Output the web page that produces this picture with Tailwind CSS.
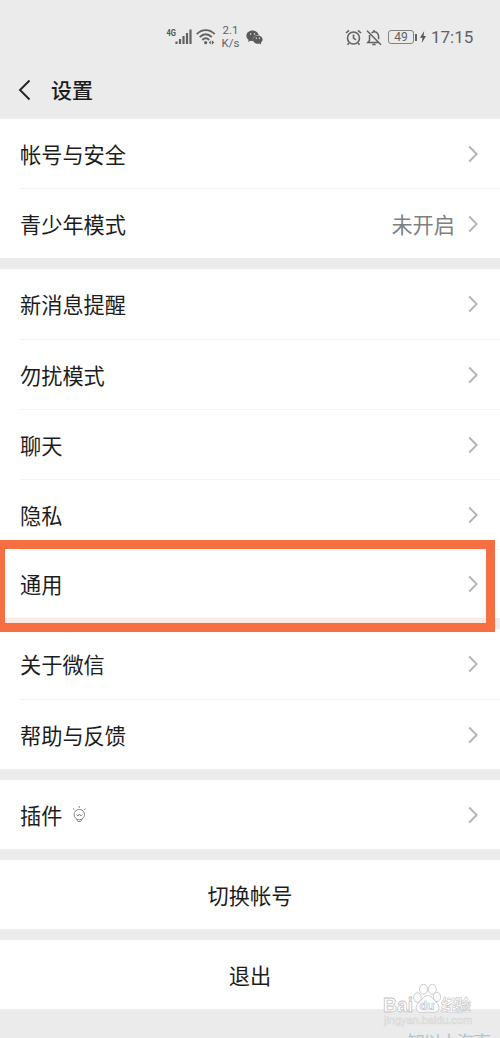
<!DOCTYPE html>
<html lang="zh-CN">

<head>
  <meta charset="UTF-8" />
  <meta name="viewport" content="width=device-width, initial-scale=1.0" />
  <title>设置</title>
  <script src="https://cdn.jsdelivr.net/npm/@tailwindcss/browser@4"></script>
</head>

<body class="bg-[#ebebeb]">
  <svg class="hidden">
    <symbol id="chevron" viewBox="0 0 10 18">
      <path d="M1.2 1.5 8.7 9 1.2 16.5" fill="none" stroke="#b2b2b2" stroke-width="1.8" />
    </symbol>
  </svg>

  <div class="relative w-[500px] h-[1038px] overflow-hidden bg-[#ebebeb] text-[21.2px] leading-none text-[#1c1c1c] font-['Noto_Sans_CJK_SC',sans-serif]">

    <!-- Status bar -->
    <div class="h-[60px] pt-[14px] pl-[166px] pr-[27px] flex items-center text-[#626262] font-[Roboto,sans-serif]">
      <svg class="w-[27px] h-[18px]" viewBox="0 0 27 18">
        <text x="0.5" y="7.5" font-size="9" font-weight="700" textLength="9.5" lengthAdjust="spacingAndGlyphs" fill="#555">4G</text>
        <path d="M10.500 13.500V16M14 11V16M17.500 8V16M21 5V16M24.500 1.500V16" stroke="#626262" stroke-width="2.200" fill="none" />
      </svg>
      <svg class="ml-[3px] w-[20px] h-[18px]" viewBox="0 0 20 18">
        <g fill="none" stroke="#626262" stroke-width="1.900">
          <path d="M.8 6.200C6 .8 13.500.8 18.700 6.200" />
          <path d="M3.700 9.200C7.500 5.200 12 5.200 15.800 9.200" />
          <path d="M6.300 12C8.500 9.700 11 9.700 13.200 12" />
        </g>
        <circle cx="9.700" cy="14.700" r="1.600" fill="#626262" />
        <path d="m12.800 14.500 2-2v4zM18.300 14.500l-2.500-2.300v4.600z" fill="#626262" />
      </svg>
      <div class="ml-[4px] w-[21px] text-center text-[11.5px] leading-[13px] whitespace-nowrap">2.1<br>K/s</div>
      <svg class="ml-[5px] w-[17px] h-[15px]" viewBox="0 0 17 15">
        <path d="M6.500.5C3 .5.400 2.800.400 5.800c0 1.700.800 3.100 2.200 4.100L2 12l2.300-1.200c.7.200 1.400.3 2.200.3h.5c-.9-3.300 1.900-6.300 5.700-6.200C12.200 2.300 9.600.5 6.500.5z" fill="#5a5a5a" />
        <path d="M11.800 5.400c-2.800 0-4.900 1.900-4.900 4.200s2.100 4.200 4.900 4.200c.6 0 1.200-.1 1.700-.3l1.800 1-.5-1.700c1.100-.8 1.800-1.900 1.800-3.200 0-2.300-2.100-4.200-4.800-4.200z" fill="#5a5a5a" />
        <g fill="#ebebeb"><circle cx="4.600" cy="4" r=".8" /><circle cx="8.500" cy="4" r=".8" /><circle cx="10.300" cy="8.300" r=".7" /><circle cx="13.400" cy="8.300" r=".7" /></g>
      </svg>
      <svg class="ml-auto w-[17px] h-[17px]" viewBox="0 0 17 17" fill="none" stroke="#626262" stroke-width="1.600">
        <circle cx="8.500" cy="9" r="6" />
        <path d="M8.500 5.500V9l2.500 2M1 4l3-2.700M16 4l-3-2.700M4 14l-1.500 1.800M13 14l1.500 1.800" />
      </svg>
      <svg class="ml-[4px] w-[16px] h-[17px]" viewBox="0 0 16 17" fill="none" stroke="#626262" stroke-width="1.500">
        <path d="M5.500 4C9.500 1.200 12.600 4 12.600 7.500v2.800M3.500 6v5.500l-1.700 2h11.400M6.300 15.500h3.400M8 1v1.500M1 1.800l14 14" />
      </svg>
      <div class="ml-[6px] w-[26px] h-[14px] border border-[#828282] rounded-[3px] text-[12px] leading-[13px] text-center">49</div>
      <div class="ml-px w-[2px] h-[7px] bg-[#626262]"></div>
      <svg class="ml-[3px] w-[6px] h-[12px]" viewBox="0 0 6 12"><path d="M4.200 0 0 6.800h2.500L1.800 12 6 5H3.500z" fill="#555" /></svg>
      <div class="ml-[5px] w-[42px] text-[17px] whitespace-nowrap">17:15</div>
    </div>

    <!-- Title bar -->
    <header class="h-[59px] flex items-center pl-[18px]">
      <svg class="w-[13px] h-[22px]" viewBox="0 0 13 22"><path d="M11.500 1.500 2 11l9.500 9.500" fill="none" stroke="#222" stroke-width="1.900" /></svg>
      <h1 class="ml-[20px] text-[21px] leading-none font-medium">设置</h1>
    </header>

    <main class="flex flex-col gap-[11px]">
      <section class="bg-white">
        <div class="h-[69px] pl-5 pr-[22px] flex items-center justify-between"><span>帐号与安全</span><svg class="w-[10px] h-[18px]"><use href="#chevron" /></svg></div>
        <div class="ml-5 h-[70px] pr-[22px] flex items-center border-t border-[#f3f3f3]"><span>青少年模式</span><span class="ml-auto mr-[13px] text-[#808080]">未开启</span><svg class="w-[10px] h-[18px]"><use href="#chevron" /></svg></div>
      </section>

      <section class="bg-white">
        <div class="h-[70px] pl-5 pr-[22px] flex items-center justify-between"><span>新消息提醒</span><svg class="w-[10px] h-[18px]"><use href="#chevron" /></svg></div>
        <div class="ml-5 h-[70px] pr-[22px] flex items-center justify-between border-t border-[#f3f3f3]"><span>勿扰模式</span><svg class="w-[10px] h-[18px]"><use href="#chevron" /></svg></div>
        <div class="ml-5 h-[70px] pr-[22px] flex items-center justify-between border-t border-[#f3f3f3]"><span>聊天</span><svg class="w-[10px] h-[18px]"><use href="#chevron" /></svg></div>
        <div class="ml-5 h-[70px] pr-[22px] flex items-center justify-between border-t border-[#f3f3f3]"><span>隐私</span><svg class="w-[10px] h-[18px]"><use href="#chevron" /></svg></div>
        <div class="ml-5 h-[69px] pr-[22px] flex items-center justify-between border-t border-[#f3f3f3]"><span>通用</span><svg class="w-[10px] h-[18px]"><use href="#chevron" /></svg></div>
      </section>

      <section class="bg-white">
        <div class="h-[70px] pl-5 pr-[22px] flex items-center justify-between"><span>关于微信</span><svg class="w-[10px] h-[18px]"><use href="#chevron" /></svg></div>
        <div class="ml-5 h-[70px] pr-[22px] flex items-center justify-between border-t border-[#f3f3f3]"><span>帮助与反馈</span><svg class="w-[10px] h-[18px]"><use href="#chevron" /></svg></div>
      </section>

      <section class="h-[69px] pl-5 pr-[22px] flex items-center bg-white">
        <span>插件</span>
        <svg class="ml-[10px] w-[15px] h-[17px]" viewBox="0 0 15 17" fill="none" stroke="#858585" stroke-width="1">
          <circle cx="7.300" cy="8.600" r="5.200" />
          <path d="M4.500 13.300 6 15.500h2.600l1.500-2.200M4.500 8.500 6 10l1.300-2 1.500 2 1.500-1.500M7.300 0v1.800M1 2.500l1.400 1.300M13.600 2.500l-1.400 1.300" />
        </svg>
        <svg class="ml-auto w-[10px] h-[18px]"><use href="#chevron" /></svg>
      </section>

      <section class="h-[69px] flex items-center justify-center bg-white">切换帐号</section>
      <section class="h-[69px] flex items-center justify-center bg-white">退出</section>
    </main>

    <!-- Highlight frame -->
    <div class="absolute -left-[3px] top-[540px] w-[498px] h-[92px] border-8 border-t-9 border-r-9 border-b-9 border-[#f66f43]">
      <div class="absolute inset-x-0 bottom-0 h-[5px] bg-[#fbe9e4]"></div>
    </div>

    <!-- Watermark -->
    <svg class="absolute left-[370px] top-[970px] w-[130px] h-[68px]" viewBox="0 0 130 68">
      <g fill="#fdfdfd" stroke="#c6c6c6" stroke-width=".9">
        <ellipse cx="47.500" cy="27.500" rx="3.800" ry="4.800" />
        <ellipse cx="53.500" cy="19.300" rx="4" ry="5" />
        <ellipse cx="62.300" cy="19.300" rx="4" ry="5" />
        <ellipse cx="67" cy="27" rx="3.600" ry="4.700" />
        <path d="M57.500 25.500c-4 0-5 4-8 6.500-6 5-3.500 11 3 10.500 4-.5 6-.5 10 0 6.500.5 9-6 3.500-10.500-3-2.500-4.500-6.500-8.500-6.500z" />
      </g>
      <g font-family="Liberation Sans, sans-serif" fill="#fff" stroke="#c4c4c4" stroke-width=".8">
        <text x="13" y="41.500" font-size="20" font-weight="700" textLength="30" lengthAdjust="spacingAndGlyphs">Bai</text>
        <text x="49.500" y="39.500" font-size="13" font-weight="700" textLength="15" lengthAdjust="spacingAndGlyphs" stroke-width=".7">du</text>
        <text x="71" y="40.500" font-size="15.500" font-family="Noto Sans CJK SC, sans-serif" font-weight="700" textLength="30" stroke-width=".6">经验</text>
        <text x="14" y="53.500" font-size="10" fill="#f2f2f2" stroke="#d6d6d6" stroke-width=".5" textLength="88" lengthAdjust="spacingAndGlyphs">jingyan.baidu.com</text>
      </g>
      <text x="37" y="79" font-size="18" font-family="Noto Sans CJK SC, sans-serif" fill="#b3c6cd" textLength="84">知以人海南</text>
    </svg>
  </div>
</body>

</html>
